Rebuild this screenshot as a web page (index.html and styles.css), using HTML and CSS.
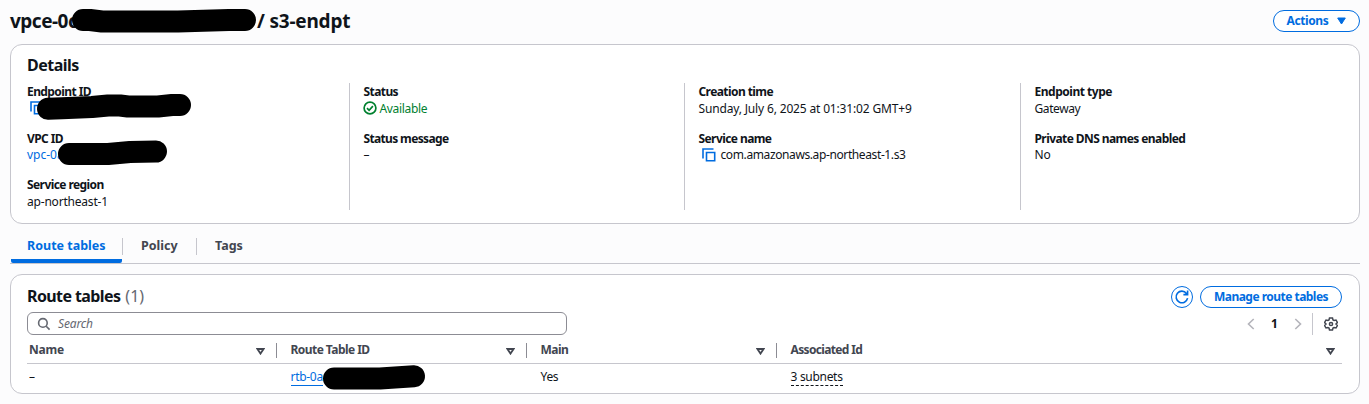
FILE: index.html
```html
<!DOCTYPE html>
<html lang="en">
<head>
<meta charset="utf-8">
<title>s3-endpt</title>
<link rel="stylesheet" href="styles.css">
</head>
<body>
<header class="page-header">
  <h1 class="page-title"><span class="title-id">vpce-0c</span><span class="title-name">/ s3-endpt</span></h1>
  <button class="btn btn-actions"><span>Actions</span><svg width="9" height="8" viewBox="0 0 9 8"><path d="M.7 1h7.6L4.5 7z" fill="currentColor" stroke="currentColor" stroke-linejoin="round"/></svg></button>
</header>

<section class="card details">
  <h2 class="card-title details-title">Details</h2>
  <div class="columns">
    <div class="column">
      <dl class="field"><dt>Endpoint ID</dt><dd><svg class="copy" width="14" height="14" viewBox="0 0 14 14"><path d="M1 10.5V1h10.5M4.5 4.5h8.2v8.2H4.5z"/></svg></dd></dl>
      <dl class="field"><dt>VPC ID</dt><dd><a class="link">vpc-0a</a></dd></dl>
      <dl class="field"><dt>Service region</dt><dd class="v-region">ap-northeast-1</dd></dl>
    </div>
    <div class="column">
      <dl class="field"><dt>Status</dt><dd class="status"><svg width="14" height="14" viewBox="0 0 14 14"><circle cx="7" cy="7" r="5.9"/><path d="M4 7.2l2.1 2.1 3.8-4.2"/></svg><span>Available</span></dd></dl>
      <dl class="field"><dt class="l-message">Status message</dt><dd>–</dd></dl>
    </div>
    <div class="column">
      <dl class="field"><dt>Creation time</dt><dd class="v-creation">Sunday, July 6, 2025 at 01:31:02 GMT+9</dd></dl>
      <dl class="field"><dt>Service name</dt><dd><svg class="copy" width="14" height="14" viewBox="0 0 14 14"><path d="M1 10.5V1h10.5M4.5 4.5h8.2v8.2H4.5z"/></svg><span class="v-service">com.amazonaws.ap-northeast-1.s3</span></dd></dl>
    </div>
    <div class="column">
      <dl class="field"><dt class="l-type">Endpoint type</dt><dd class="v-type">Gateway</dd></dl>
      <dl class="field"><dt>Private DNS names enabled</dt><dd>No</dd></dl>
    </div>
  </div>
</section>

<nav class="tabs">
  <a class="tab tab-active"><span>Route tables</span></a>
  <a class="tab tab-policy"><span>Policy</span></a>
  <a class="tab tab-tags"><span>Tags</span></a>
</nav>

<section class="card routes">
  <div class="routes-head">
    <h2 class="card-title"><span class="routes-title">Route tables</span><span class="count">(1)</span></h2>
    <div class="routes-actions">
      <button class="btn btn-round" aria-label="Refresh"><svg width="16" height="16" viewBox="0 0 16 16"><path d="M13.6 9.2A5.800 5.800 0 1 1 12.500 4.400L13.600 5.600M13.600 1.400V5.600H9.400" fill="none" stroke="currentColor" stroke-width="1.6"/></svg></button>
      <button class="btn btn-manage"><span>Manage route tables</span></button>
    </div>
  </div>
  <div class="toolbar">
    <div class="search"><svg width="14" height="14" viewBox="0 0 14 14"><circle cx="5.900" cy="5.900" r="4.300"/><path d="M9.200 9.200l3.400 3.400"/></svg><span>Search</span></div>
    <div class="pager">
      <svg class="arrow" width="8" height="12" viewBox="0 0 8 12"><path d="M6.700 1L1.500 6l5.200 5"/></svg>
      <span class="page">1</span>
      <svg class="arrow" width="8" height="12" viewBox="0 0 8 12"><path d="M1.300 1l5.200 5-5.200 5"/></svg>
      <span class="pager-line"></span>
      <svg class="gear" width="14" height="14" viewBox="0 0 14 14"><path d="M5.500 1h3l.5 1.900 1.100.6 1.900-.5 1.400 2.500L12 7l1.400 1.500L12 11l-1.900-.5-1.100.6L8.500 13h-3L5 11.100l-1.100-.6L2 11 .6 8.500 2 7 .6 5.500 2 3l1.900.5L5 2.900z"/><circle cx="7" cy="7" r="1.600"/></svg>
    </div>
  </div>
  <div class="table">
    <div class="row head">
      <div class="cell"><span>Name</span><svg class="sort" width="9" height="7" viewBox="0 0 9 7"><path d="M1.400 1h6.200L4.500 5.600z"/></svg></div>
      <div class="cell"><span>Route Table ID</span><svg class="sort" width="9" height="7" viewBox="0 0 9 7"><path d="M1.400 1h6.200L4.500 5.600z"/></svg></div>
      <div class="cell"><span>Main</span><svg class="sort" width="9" height="7" viewBox="0 0 9 7"><path d="M1.400 1h6.200L4.500 5.600z"/></svg></div>
      <div class="cell"><span class="h-assoc">Associated Id</span><svg class="sort" width="9" height="7" viewBox="0 0 9 7"><path d="M1.400 1h6.200L4.500 5.600z"/></svg></div>
    </div>
    <div class="row body">
      <div class="cell">–</div>
      <div class="cell"><a class="link underlined">rtb-0a</a></div>
      <div class="cell">Yes</div>
      <div class="cell"><span class="subnets">3 subnets</span></div>
    </div>
  </div>
</section>

<svg class="redactions" width="1369" height="404" viewBox="0 0 1369 404">
  <path d="M83 20H90L102 21.500H178L229 20H245"/>
  <path d="M48 108.800L62 108.200L92 107L108 105.500H120L128 106.500H158L172 105H180"/>
  <path d="M69 154H108L130 152L156 151.500"/>
  <path d="M334 378.500H380L395 377.500L414 376.300"/>
</svg>
</body>
</html>
```
FILE: styles.css
```css
* { box-sizing: border-box; }
body {
  margin: 0;
  position: relative;
  width: 1369px;
  height: 404px;
  overflow: hidden;
  padding: 0 9px 0 10px;
  background: #fcfcfd;
  color: #0f141a;
  font: 12px/17px "Noto Sans", "Open Sans", sans-serif;
}
h1, h2, dl, dd { margin: 0; }
svg { flex: none; display: block; }
span, a, dt, dd { white-space: nowrap; }

.page-header { display: flex; justify-content: space-between; height: 44px; padding-top: 10px; }
.page-title { display: flex; font-size: 19px; line-height: 22px; font-weight: 700; letter-spacing: -.2px; }
.title-id { width: 247px; letter-spacing: -.5px; }
.btn {
  display: flex; align-items: center; justify-content: center;
  height: 22px; padding: 0; border: 1.5px solid #006ce0; border-radius: 11px;
  background: #fff; color: #006ce0;
  font: 700 12px/18px "Noto Sans", sans-serif;
}
.btn-actions { width: 87px; gap: 9px; letter-spacing: -.4px; }

.card { border: 1px solid #c6c6cd; border-radius: 12px; background: #fff; padding: 0 16px; }
.card-title { font-size: 16px; line-height: 22px; font-weight: 700; }
.details-title { letter-spacing: -.5px; }
.details { height: 180px; padding-top: 9px; }
.columns { display: grid; grid-template-columns: 322px 335px 336px 1fr; height: 127px; margin-top: 7px; }
.column { display: flex; flex-direction: column; gap: 12.500px; padding-left: 13.500px; border-left: 1px solid #c6c6cd; }
.column:first-child { padding-left: 0; border-left: 0; }
.field { height: 34px; }
dt { font-weight: 700; letter-spacing: -.58px; }
dd { display: flex; align-items: center; height: 16px; }
.l-message { letter-spacing: -.65px; }
.l-type { letter-spacing: -.48px; }
.v-region { letter-spacing: -.2px; }
.v-creation { letter-spacing: -.16px; }
.v-service { letter-spacing: -.39px; }
.v-type { letter-spacing: -.4px; }
.link { color: #006ce0; }
.copy { margin: 0 5px 0 3px; fill: none; stroke: #006ce0; stroke-width: 1.600; }
.status { gap: 3px; color: #00802f; letter-spacing: -.33px; }
.status svg { margin-left: -1px; fill: none; stroke: #00802f; stroke-width: 1.700; }

.tabs { display: flex; height: 40px; border-bottom: 1px solid #c6c6cd; color: #424650; font-weight: 700; font-size: 12.500px; }
.tab { display: flex; align-items: center; height: 17px; margin-top: 14px; padding: 0 18px; border-left: 1px solid #c6c6cd; }
.tab span { margin-top: -2px; }
.tab-active { height: 39px; width: 111px; margin: 0 0 0 1px; padding: 7px 0 0 16px; border: 0; border-bottom: 4px solid #006ce0; border-radius: 2px; color: #006ce0; }
.tab-active span { margin-top: 0; }
.tab-policy { width: 74px; }

.routes { height: 120px; margin-top: 10px; padding: 11px 17px 0 16px; }
.routes-head { display: flex; justify-content: space-between; height: 26px; }
.routes-head .card-title { display: flex; gap: 5px; line-height: 20px; }
.routes-title { letter-spacing: -.6px; }
.count { color: #656871; font-weight: 400; }
.routes-actions { display: flex; gap: 7px; }
.btn-round { width: 22px; }
.btn-manage { width: 142px; letter-spacing: -.52px; }
.btn-manage span { margin-top: -1px; }
.toolbar { display: flex; justify-content: space-between; height: 23px; }
.search { display: flex; align-items: center; gap: 7px; width: 540px; height: 23px; padding-left: 9px; border: 1px solid #8c8c94; border-radius: 6px; color: #656871; font-style: italic; letter-spacing: -.15px; }
.search span { margin-top: -1px; }
.search svg { fill: none; stroke: #656871; stroke-width: 1.600; }
.pager { display: flex; align-items: center; padding-right: 4px; }
.arrow { fill: none; stroke: #b4b4bb; stroke-width: 1.600; }
.page { width: 39px; text-align: center; font-weight: 700; }
.pager-line { width: 1px; height: 22px; margin: 0 11px 0 10px; background: #c6c6cd; }
.gear { fill: none; stroke: #424650; stroke-width: 1.500; }
.row { display: grid; grid-template-columns: 249px 250px 250px 1fr; }
.head { height: 29px; padding-top: 8px; border-bottom: 1px solid #c6c6cd; color: #424650; font-weight: 700; letter-spacing: -.55px; }
.head .cell { display: flex; align-items: center; justify-content: space-between; height: 15px; padding: 0 11px 0 13.500px; border-left: 1px solid #8c8c94; }
.head .cell:first-child { padding-left: 2px; border-left: 0; letter-spacing: -.2px; }
.head .cell:last-child { padding-right: 7px; }
.head span { margin-top: -2px; }
.h-assoc { letter-spacing: -.65px; }
.sort { margin-top: 2px; fill: none; stroke: #424650; stroke-width: 1.800; }
.body { padding-top: 4px; letter-spacing: -.3px; }
.body .cell { padding-left: 14.500px; }
.body .cell:first-child { padding-left: 2px; }
.underlined { border-bottom: 1px solid #006ce0; }
.subnets { border-bottom: 1px dashed #0f141a; }
.redactions { position: absolute; left: 0; top: 0; fill: none; stroke: #000; stroke-width: 22px; stroke-linecap: round; stroke-linejoin: round; pointer-events: none; }
```
